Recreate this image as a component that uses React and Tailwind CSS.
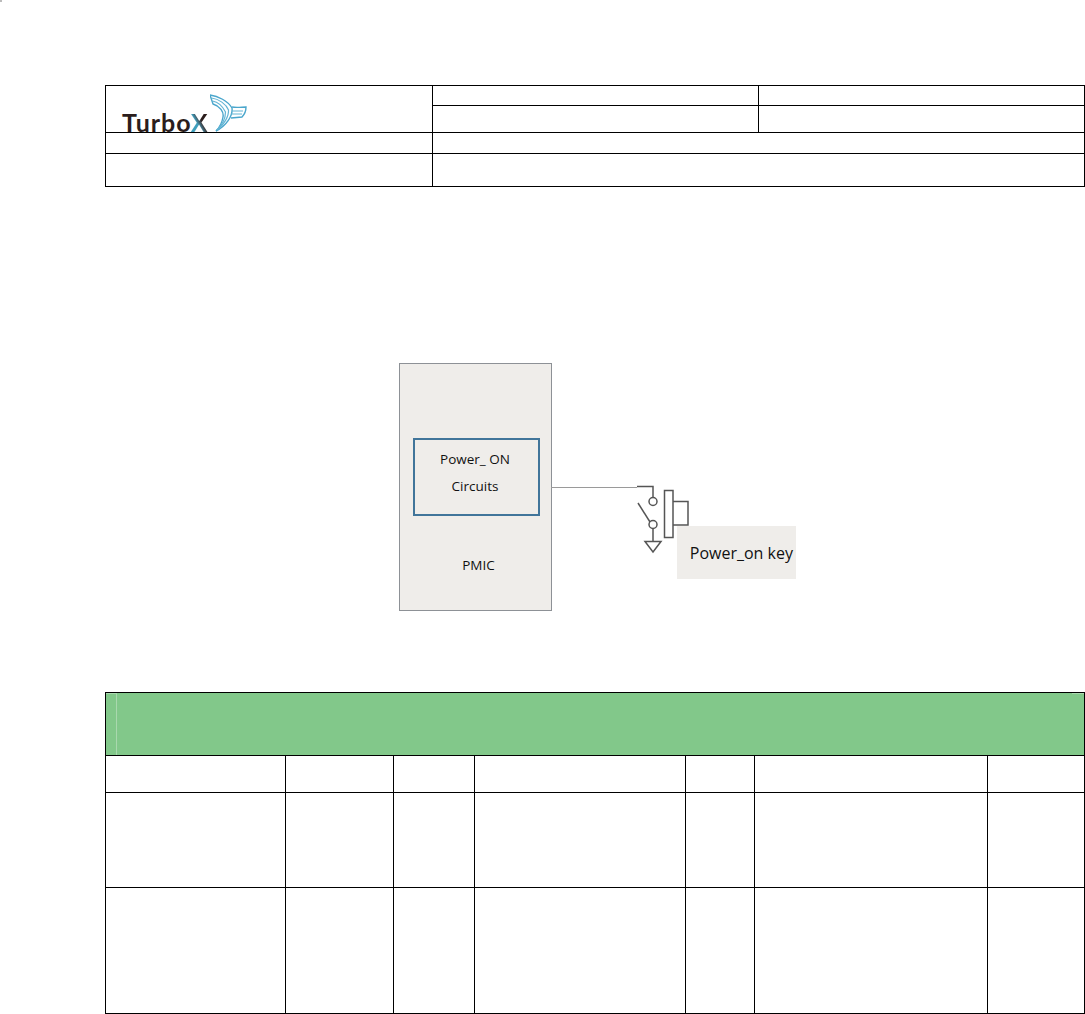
import React from 'react';

const Logo = () => {
  return (
    <div className="flex items-end h-[46px] pl-[16px]">
      <span className="font-['Lato',sans-serif] text-[25px] leading-[20px] tracking-[1px] text-[#2b1d1c] font-bold">
        Turbo<span className="bg-linear-to-tr from-[#3f9fbd] from-40% to-[#2b1d1c] to-60% bg-clip-text text-transparent">X</span>
      </span>
      <svg width="38" height="38" viewBox="0 0 38 38" fill="none" className="ml-[2px] shrink-0">
        <path d="M0 1 C8 2 18 7 22 14 C23 22 16 32 6 37" stroke="#4aa6cc" strokeWidth="1.4" />
        <path d="M0 1 L3 10 C10 12 14 18 13 23 C12 29 9 34 6 37" stroke="#4aa6cc" strokeWidth="1.4" />
        <path d="M1.5 4 C9 5 16 10 18.5 16 C19 22 14 31 7 36" stroke="#62b4d4" strokeWidth="1.2" />
        <path d="M2.5 7 C8 8 13 13 15.5 18 C15.5 24 12 31 7 36" stroke="#62b4d4" strokeWidth="1.2" />
        <path d="M22 13 C27 14 32 13 36 13 C36 17 34 21 32 23 L21 24" stroke="#4aa6cc" strokeWidth="1.4" />
        <path d="M22 17 L33 17 M21 20 L32 20" stroke="#62b4d4" strokeWidth="1" />
      </svg>
    </div>
  );
};

const Diagram = () => {
  return (
    <div className="relative h-[505px] w-[980px]">
      {/* coordinates here are relative to x=105, y=187 */}
      <div className="absolute left-[294px] top-[176px] w-[153px] h-[248px] bg-[#efedea] border border-[#8d9196]">
        <div className="absolute left-[13px] top-[74px] w-[127px] h-[78px] border-2 border-[#41759a] pr-[3px] text-center text-[13.5px] text-[#111] font-['Open_Sans',sans-serif]">
          <div className="mt-[9px] leading-[20px]">Power_ ON</div>
          <div className="mt-[7px] leading-[20px]">Circuits</div>
        </div>
        <div className="absolute left-[13px] top-[191px] w-[131px] text-center text-[13.5px] leading-[20px] text-[#111] font-['Open_Sans',sans-serif]">PMIC</div>
      </div>

      <div className="absolute left-[572px] top-[339px] w-[119px] h-[53px] bg-[#efedea] flex items-center justify-end pr-[3px] text-[16px] text-[#111] font-['Open_Sans',sans-serif]">
        Power_on key
      </div>

      <svg className="absolute left-[446px] top-[290px]" width="150" height="80" viewBox="0 0 150 80" fill="none">
        <path d="M0 10.5 H86" stroke="#9a9a9a" />
        <path d="M86 9.5 H102 V20.5" stroke="#555" strokeWidth="1.5" />
        <circle cx="102" cy="24.5" r="4" stroke="#555" strokeWidth="1.5" />
        <path d="M87 26 L99 45" stroke="#555" strokeWidth="1.5" />
        <circle cx="102" cy="47.5" r="4" stroke="#555" strokeWidth="1.5" />
        <path d="M102 51.5 V64" stroke="#555" strokeWidth="1.5" />
        <path d="M94 64.5 H110 L102 75 Z" stroke="#555" strokeWidth="1.5" />
        <rect x="113.5" y="13.5" width="8.5" height="47" stroke="#555" strokeWidth="1.5" />
        <path d="M122 24.5 H137 V48 H122" stroke="#555" strokeWidth="1.5" />
      </svg>
    </div>
  );
};

const App = () => {
  return (
    <div className="relative bg-white w-[1085px] h-[1014px] overflow-hidden pt-[85px] pl-[105px]">
      <div className="absolute left-0 top-0 w-[2px] h-[2px] bg-[#bbb]"></div>

      <div className="w-[980px] border border-black grid grid-cols-[327px_326px_1fr] grid-rows-[20px_27px_21px_32px]">
        <div className="row-span-2 border-r border-b border-black"><Logo /></div>
        <div className="border-r border-b border-black"></div>
        <div className="border-b border-black"></div>
        <div className="border-r border-b border-black"></div>
        <div className="border-b border-black"></div>
        <div className="border-r border-b border-black"></div>
        <div className="col-span-2 border-b border-black"></div>
        <div className="border-r border-black"></div>
        <div className="col-span-2"></div>
      </div>

      <Diagram />

      <div className="w-[980px] border border-black">
        <div className="relative h-[63px] bg-[#82c88a] border-b border-black">
          <div className="absolute left-0 top-0 w-[11px] h-full border-r border-t border-[#a9d8ae]"></div>
          <div className="absolute right-0 top-0 w-[12px] border-t border-[#a9d8ae]"></div>
        </div>
        <div className="grid grid-cols-[180px_108px_81px_211px_69px_233px_1fr] grid-rows-[37px_95px_125px]">
          {[0, 1, 2].map((row) => (
            <React.Fragment key={row}>
              {[0, 1, 2, 3, 4, 5, 6].map((col) => (
                <div key={col} className={cellClass(row, col)}></div>
              ))}
            </React.Fragment>
          ))}
        </div>
      </div>
    </div>
  );
};

function cellClass(row, col) {
  let cls = '';
  if (col < 6) cls += 'border-r border-black ';
  if (row < 2) cls += 'border-b border-black';
  return cls;
}

export default App;
